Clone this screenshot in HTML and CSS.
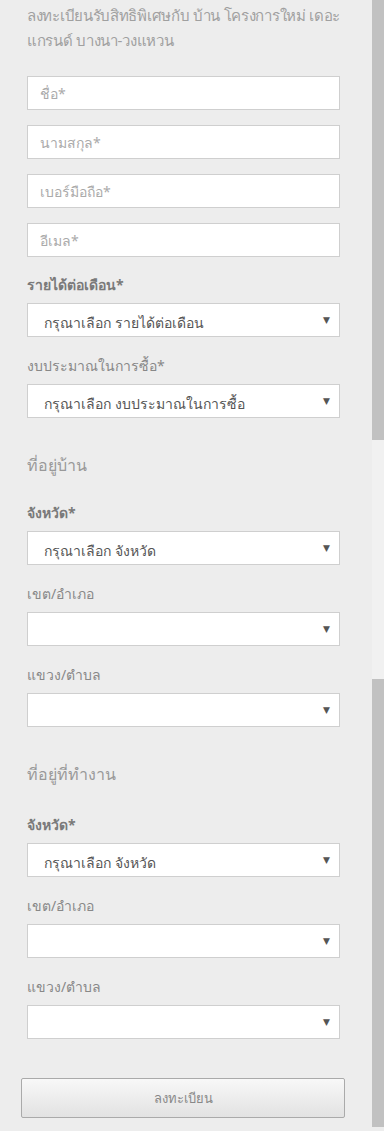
FILE: index.html
```html
<!DOCTYPE html>
<html lang="th">
<head>
    <meta charset="UTF-8">
    <meta name="viewport" content="width=device-width, initial-scale=1.0">
    <title>ลงทะเบียน</title>
    <link rel="stylesheet" href="styles.css">
</head>
<body>

<div class="page">
    <div class="content">
        <h1 class="title">ลงทะเบียนรับสิทธิพิเศษกับ บ้าน โครงการใหม่ เดอะ แกรนด์ บางนา-วงแหวน</h1>

        <form id="register-form" class="form">
            <input type="text" class="field" placeholder="ชื่อ*">
            <input type="text" class="field" placeholder="นามสกุล*">
            <input type="text" class="field" placeholder="เบอร์มือถือ*">
            <input type="text" class="field" placeholder="อีเมล*">

            <label class="label strong">รายได้ต่อเดือน*</label>
            <div class="select-wrap">
                <select class="select">
                    <option>กรุณาเลือก รายได้ต่อเดือน</option>
                </select>
            </div>

            <label class="label">งบประมาณในการซื้อ*</label>
            <div class="select-wrap">
                <select class="select">
                    <option>กรุณาเลือก งบประมาณในการซื้อ</option>
                </select>
            </div>

            <h2 class="section">ที่อยู่บ้าน</h2>

            <label class="label strong">จังหวัด*</label>
            <div class="select-wrap">
                <select class="select">
                    <option>กรุณาเลือก จังหวัด</option>
                </select>
            </div>

            <label class="label">เขต/อำเภอ</label>
            <div class="select-wrap">
                <select class="select"><option></option></select>
            </div>

            <label class="label">แขวง/ตำบล</label>
            <div class="select-wrap">
                <select class="select"><option></option></select>
            </div>

            <h2 class="section work">ที่อยู่ที่ทำงาน</h2>

            <label class="label strong">จังหวัด*</label>
            <div class="select-wrap">
                <select class="select">
                    <option>กรุณาเลือก จังหวัด</option>
                </select>
            </div>

            <label class="label">เขต/อำเภอ</label>
            <div class="select-wrap">
                <select class="select"><option></option></select>
            </div>

            <label class="label">แขวง/ตำบล</label>
            <div class="select-wrap">
                <select class="select"><option></option></select>
            </div>

            <button type="button" class="submit">ลงทะเบียน</button>
        </form>
    </div>

    <!-- scrollbar ของกรอบฟอร์ม -->
    <div class="scrollbar">
        <div class="thumb top"></div>
        <div class="track"></div>
        <div class="thumb bottom"></div>
    </div>
</div>

</body>
</html>
```

FILE: styles.css
```css
body {
    margin: 0;
    background-color: #ededed;
    font-family: "Noto Sans", "DejaVu Sans", sans-serif;
    color: #666;
}

.page {
    display: flex;
    width: 384px;
}

.content {
    width: 313px;
    padding: 0 32px 0 27px;
}

.title {
    margin: 0 -10px 0 0;
    padding-top: 3px;
    font-size: 15px;
    font-weight: normal;
    line-height: 25px;
    letter-spacing: -0.3px;
    color: #a0a0a0;
}

.form {
    display: flex;
    flex-direction: column;
    padding-top: 23px;
}

.field {
    height: 34px;
    margin-bottom: 15px;
    padding: 0 12px;
    border: 1px solid #cfcfcf;
    background-color: #fff;
    font-family: inherit;
    font-size: 14px;
    color: #555;
    box-sizing: border-box;
    outline: none;
}

.field::placeholder {
    color: #aaa;
}

.label {
    display: block;
    margin: 3px 0 8px;
    font-size: 14px;
    line-height: 20px;
    color: #888;
}

.label.strong {
    font-weight: bold;
    color: #7a7a7a;
}

.select-wrap {
    position: relative;
    margin-bottom: 16px;
}

.select-wrap::after {
    content: "\25BC";
    position: absolute;
    right: 10px;
    top: 10px;
    font-size: 9px;
    color: #555;
    pointer-events: none;
}

.select {
    display: block;
    width: 100%;
    height: 34px;
    padding: 4px 16px 0;
    border: 1px solid #cfcfcf;
    border-radius: 0;
    background-color: #fff;
    font-family: inherit;
    font-size: 14px;
    color: #555;
    -webkit-appearance: none;
    appearance: none;
    outline: none;
}

.section {
    margin: 20px 0 24px;
    font-size: 16px;
    font-weight: normal;
    line-height: 22px;
    color: #999;
}

.section.work {
    margin-bottom: 27px;
}

.submit {
    margin: 23px -5px 0 -6px;
    height: 40px;
    border: 1px solid #aaa;
    border-radius: 2px;
    background: linear-gradient(#f8f8f8, #e2e2e2);
    font-family: inherit;
    font-size: 13px;
    color: #888;
    cursor: pointer;
}

.scrollbar {
    display: flex;
    flex-direction: column;
    width: 12px;
    height: 1127px;
}

.thumb {
    background-color: #c1c1c1;
}

.thumb.top {
    height: 440px;
}

.track {
    height: 239px;
    background-color: #f1f1f1;
}

.thumb.bottom {
    flex: 1;
}
```
